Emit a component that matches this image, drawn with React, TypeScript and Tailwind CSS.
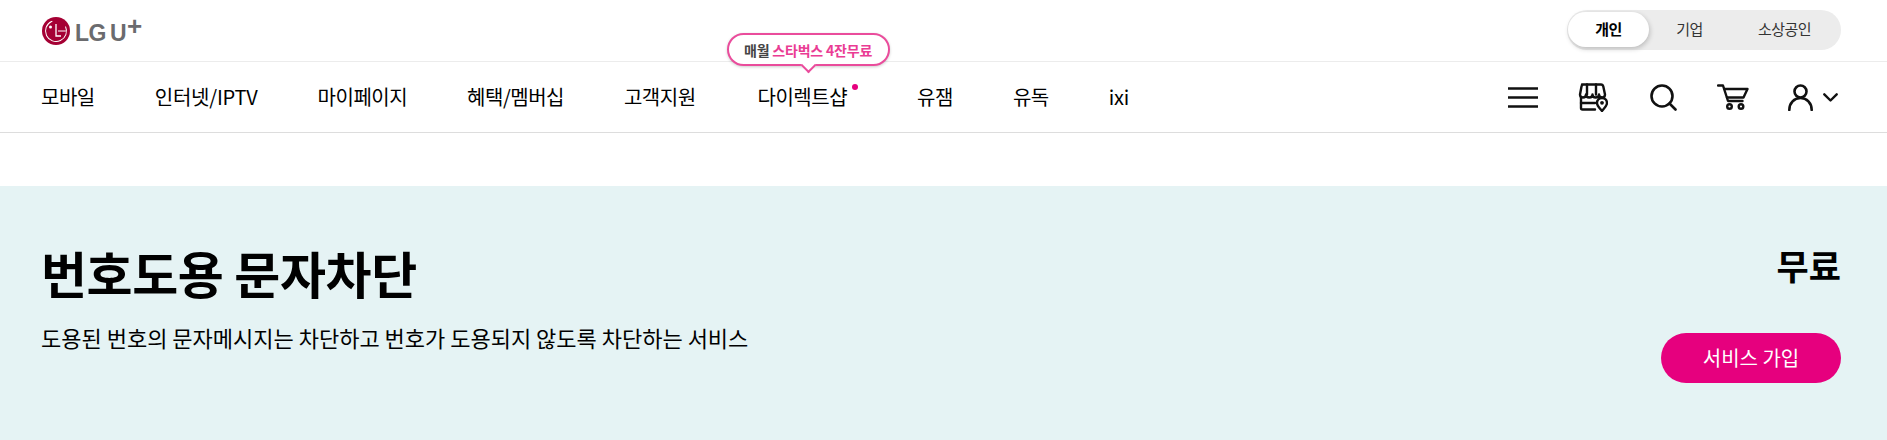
const kr = "font-['Noto_Sans_CJK_KR','Noto_Sans',sans-serif]";

function Logo() {
  return (
    <div className="flex items-center gap-[5px] mt-[1px] ml-[1px]">
      <svg width="28" height="28" viewBox="0 0 28 28">
        <circle cx="14" cy="14" r="14" fill="#a50034" />
        <circle cx="14" cy="14" r="10.500" fill="none" stroke="#fff" strokeWidth="1" strokeDasharray="50 16" transform="rotate(-25 14 14)" />
        <circle cx="8.500" cy="10" r="1.500" fill="#fff" />
        <path d="M14 7v12h5" fill="none" stroke="#fff" strokeWidth="1.300" />
        <path d="M16 14h8" stroke="#fff" strokeWidth="1" />
      </svg>
      <div className="relative w-[66px] h-[28px] font-['Liberation_Sans',sans-serif] font-bold text-[#6b6b6e] leading-none">
        <span className="absolute left-0 top-[5px] text-[23px] tracking-[-0.5px]">LG</span>
        <span className="absolute left-[35px] top-[5px] text-[23px]">U</span>
        <span className="absolute left-[52px] -top-[4px] text-[26px]">+</span>
      </div>
    </div>
  );
}

function Hamburger() {
  return (
    <svg width="30" height="21" viewBox="0 0 30 21" fill="none" stroke="#111" strokeWidth="2.600">
      <path d="M0 1.500h30M0 10.500h30M0 19.500h30" />
    </svg>
  );
}

function Store() {
  return (
    <svg width="30" height="29" viewBox="0 0 30 29" fill="none" stroke="#111" strokeWidth="2.400" strokeLinejoin="round" strokeLinecap="round">
      <path d="M4 1.500h19c1.200 0 2 .8 2.300 2l1.700 8c0 2-1.300 3-2.800 3-1.700 0-3.200-1-3.200-3 0 2-1.500 3-3.300 3s-3.200-1-3.200-3c0 2-1.500 3-3.300 3s-3.200-1-3.200-3c0 2-1.500 3-3 3-1.700 0-3-1-3-3l1.500-8c.3-1.200 1-2 2-2z" />
      <path d="M9 1.500v10M18 1.500v10" />
      <path d="M3 14.500v10.500c0 1 .6 1.500 1.500 1.500H17" />
      <path d="M3 20h14" />
      <path d="M24 28c-2-2.500-5-5-5-8a5 5 0 0 1 10 0c0 3-3 5.500-5 8z" fill="#fff" />
      <circle cx="24" cy="19.800" r="1.900" fill="#111" stroke="none" />
    </svg>
  );
}

function Search() {
  return (
    <svg width="27" height="27" viewBox="0 0 27 27" fill="none" stroke="#111" strokeWidth="2.600" strokeLinecap="round">
      <circle cx="12" cy="12" r="10.500" />
      <path d="M19.500 19.500l6 6" />
    </svg>
  );
}

function Cart() {
  return (
    <svg width="32" height="26" viewBox="0 0 32 26" fill="none" stroke="#111" strokeWidth="2.400" strokeLinecap="round" strokeLinejoin="round">
      <path d="M1 1.500h5l5 15.500h14.500" />
      <path d="M7.500 5h23l-4 8.500H10" />
      <circle cx="12.500" cy="22.500" r="2.300" />
      <circle cx="24" cy="22.500" r="2.300" />
    </svg>
  );
}

function User() {
  return (
    <svg width="25" height="27" viewBox="0 0 25 27" fill="none" stroke="#111" strokeWidth="2.600" strokeLinecap="round">
      <circle cx="12.500" cy="7.500" r="6" />
      <path d="M1.300 26c0-7 5-12 11.200-12s11.200 5 11.200 12" />
    </svg>
  );
}

function Chevron() {
  return (
    <svg width="15" height="9" viewBox="0 0 15 9" fill="none" stroke="#111" strokeWidth="2.400" strokeLinecap="round" strokeLinejoin="round">
      <path d="M1.300 1.300L7.500 7.500l6.200-6.200" />
    </svg>
  );
}

const menu = ["모바일", "인터넷/IPTV", "마이페이지", "혜택/멤버십", "고객지원", "다이렉트샵", "유잼", "유독", "ixi"];

export default function App() {
  return (
    <div className={`${kr} w-[1887px] h-[440px] bg-white text-black overflow-hidden flex flex-col`}>
      <header className="h-[62px] border-b border-[#ececec] pl-[41px] pr-[46px] flex items-center justify-between">
        <Logo />
        <div className="w-[274px] h-[40px] -mt-[1px] rounded-full bg-[#ececec] flex text-[15px] tracking-[-0.5px] text-[#333]">
          <div className="w-[81px] h-[35px] mt-[2px] ml-[1px] rounded-full bg-white shadow-[1px_2px_5px_rgba(0,0,0,0.2)] flex items-center justify-center font-bold text-black">개인</div>
          <div className="w-[81px] h-[38px] flex items-center justify-center">기업</div>
          <div className="flex-1 h-[38px] pr-[2px] flex items-center justify-center">소상공인</div>
        </div>
      </header>
      <nav className="h-[71px] border-b border-[#dddddd] pl-[41px] pr-[49px] flex items-center justify-between">
        <ul className="flex gap-[60px] text-[20px] leading-[28px] tracking-[-0.5px]">
          {menu.map((m, i) => (
            <li key={m} className={i === 5 ? "relative ml-[2px] mr-[10px]" : i === 1 || i === 8 ? "relative tracking-[-0.2px]" : "relative"}>
              {m}
              {i === 5 && (
                <>
                  <span className="absolute -right-[11px] top-[1px] w-[6px] h-[6px] rounded-full bg-[#e6007e]" />
                  <div className="absolute left-[-31px] -top-[50px] w-[163px] h-[33px] rounded-full border-2 border-[#ea4c9c] bg-white shadow-[0_1px_3px_rgba(0,0,0,0.2)] flex items-center justify-center text-[14px] font-bold tracking-[-0.2px] whitespace-nowrap">
                    <span className="text-[#444]">매월&nbsp;</span>
                    <span className="text-[#ea3c94]">스타벅스 4잔무료</span>
                    <span className="absolute left-1/2 -bottom-[7px] -ml-[5px] w-[11px] h-[11px] rotate-45 bg-white border-r-2 border-b-2 border-[#ea4c9c]" />
                  </div>
                </>
              )}
            </li>
          ))}
        </ul>
        <div className="flex items-center">
          <div className="flex"><Hamburger /></div>
          <div className="ml-[40px] flex"><Store /></div>
          <div className="ml-[42px] flex"><Search /></div>
          <div className="ml-[40px] flex"><Cart /></div>
          <div className="ml-[39px] flex"><User /></div>
          <div className="ml-[10px] flex"><Chevron /></div>
        </div>
      </nav>
      <div className="h-[53px]" />
      <section className="flex-1 bg-[#e5f3f4] pl-[41px] pr-[46px] flex justify-between">
        <div>
          <h1 className="mt-[54px] text-[50px] font-bold leading-[64px] tracking-[-0.4px]">번호도용 문자차단</h1>
          <p className="mt-[18px] text-[22px] leading-[30px]">도용된 번호의 문자메시지는 차단하고 번호가 도용되지 않도록 차단하는 서비스</p>
        </div>
        <div className="flex flex-col items-end">
          <div className="mt-[56px] text-[35px] font-bold leading-[46px]">무료</div>
          <button className="mt-[45px] w-[180px] h-[50px] rounded-full bg-[#e6007e] text-white text-[20px]">서비스 가입</button>
        </div>
      </section>
    </div>
  );
}
